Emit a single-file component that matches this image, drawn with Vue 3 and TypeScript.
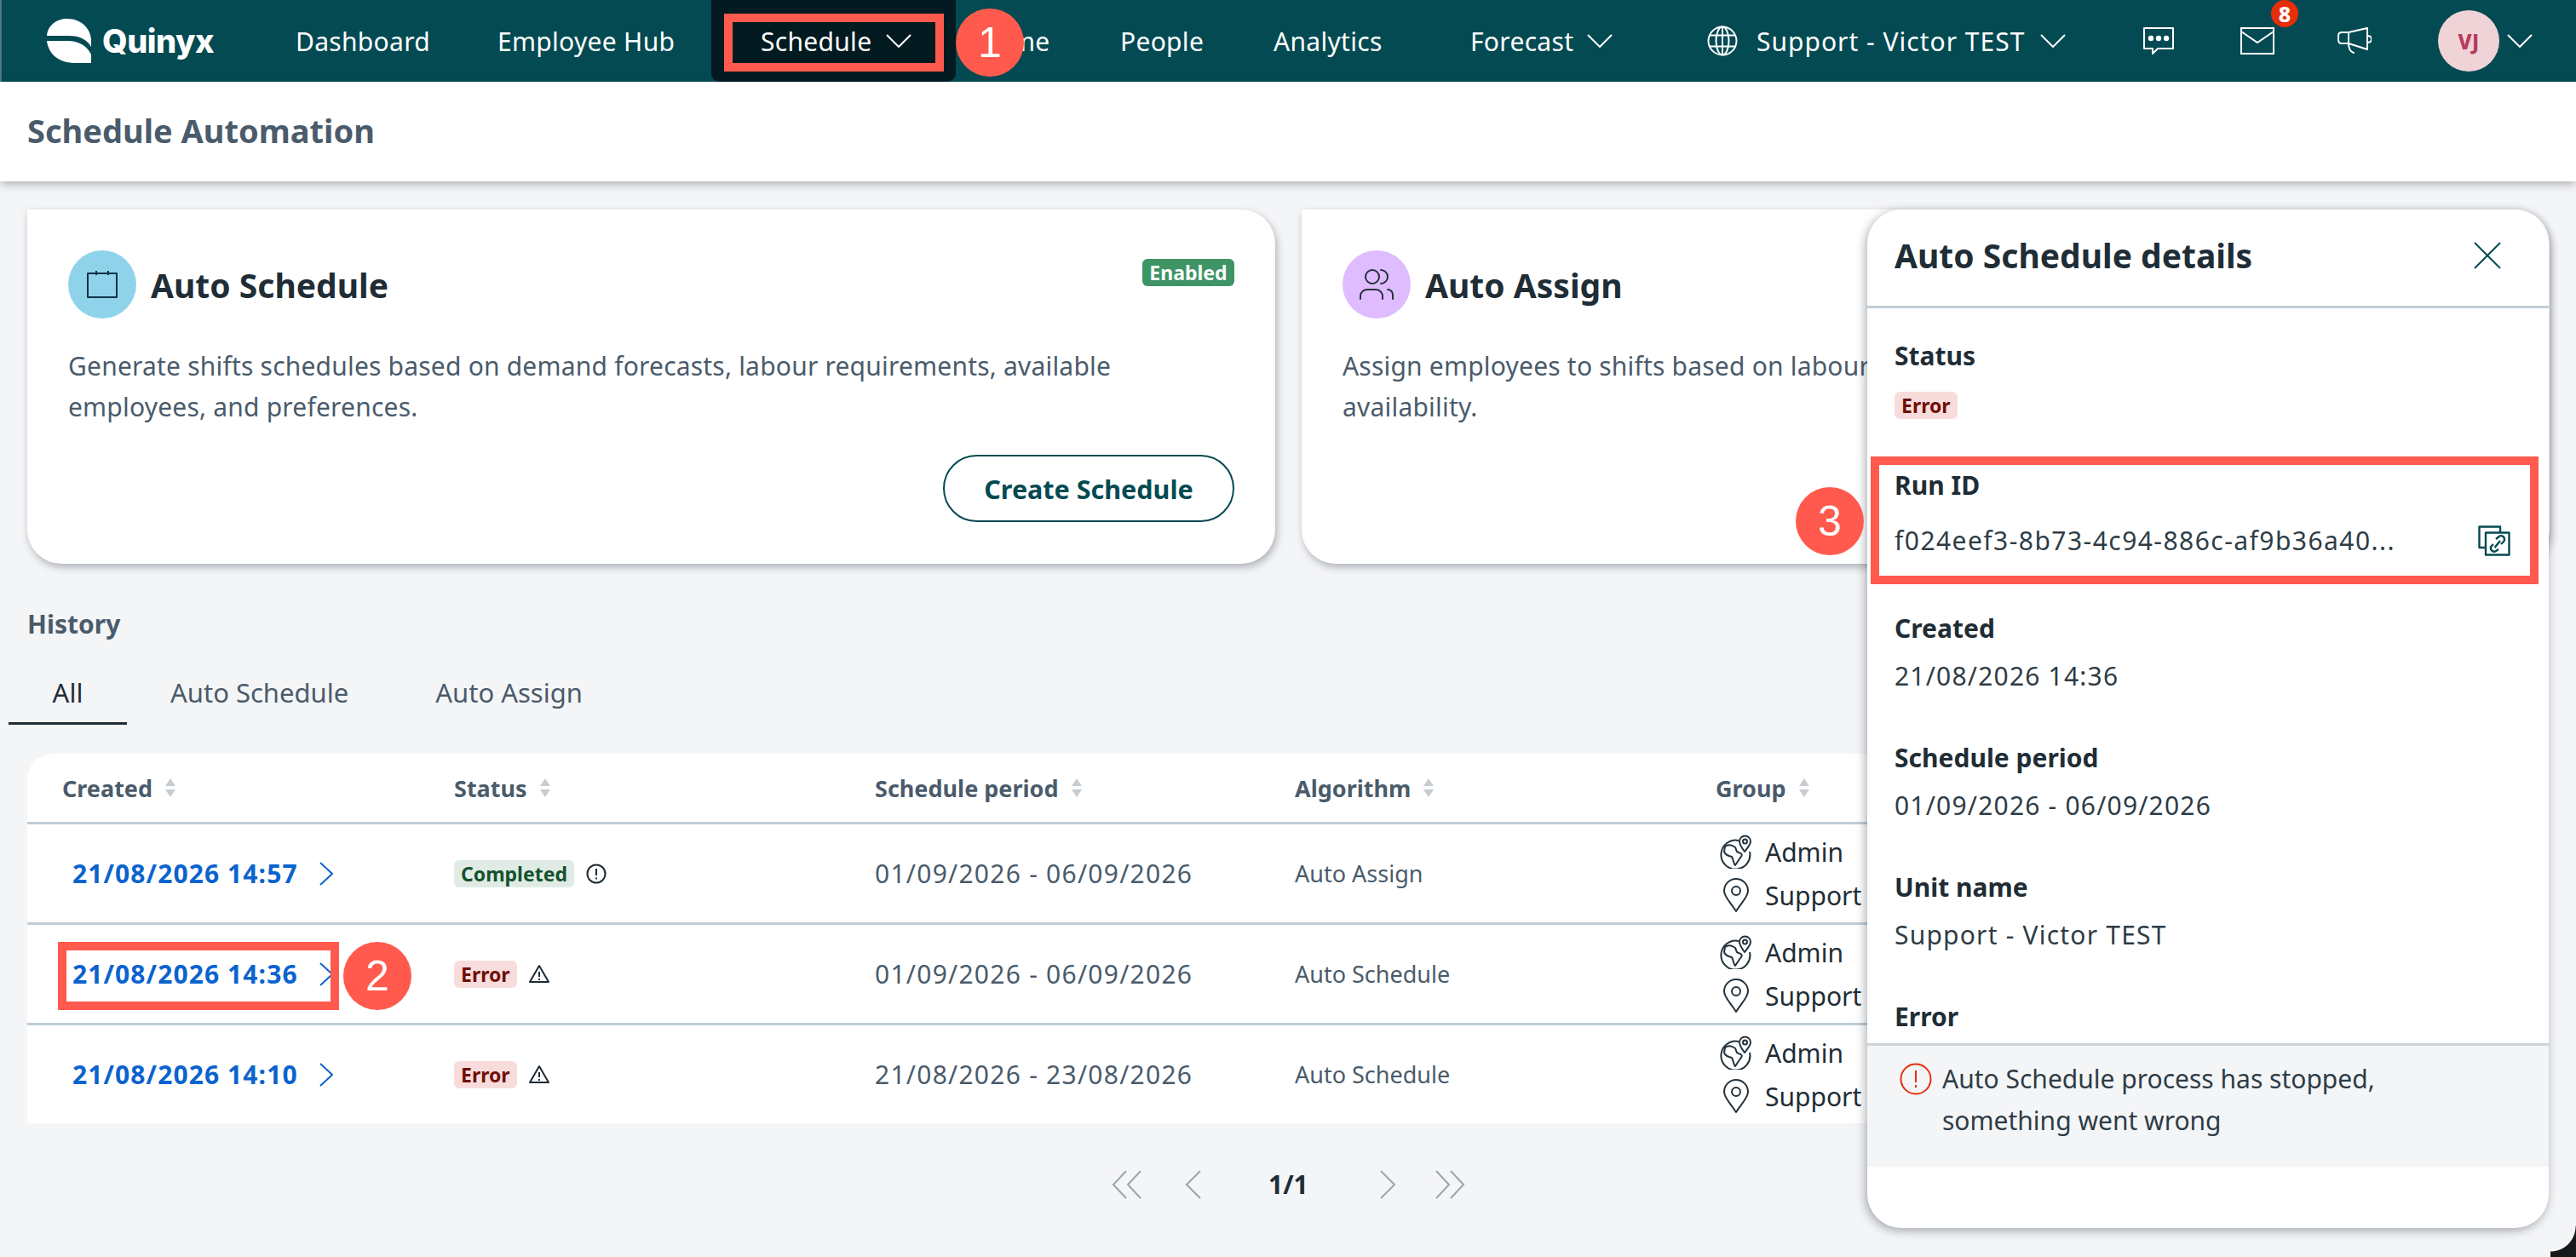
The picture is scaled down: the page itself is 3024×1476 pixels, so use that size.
<script setup lang="ts">
interface Run {
  created: string
  status: 'Completed' | 'Error'
  period: string
  algorithm: string
}

const tabs = ['All', 'Auto Schedule', 'Auto Assign']
const columns = ['Created', 'Status', 'Schedule period', 'Algorithm', 'Group']

const runs: Run[] = [
  { created: '21/08/2026 14:57', status: 'Completed', period: '01/09/2026 - 06/09/2026', algorithm: 'Auto Assign' },
  { created: '21/08/2026 14:36', status: 'Error', period: '01/09/2026 - 06/09/2026', algorithm: 'Auto Schedule' },
  { created: '21/08/2026 14:10', status: 'Error', period: '21/08/2026 - 23/08/2026', algorithm: 'Auto Schedule' },
]
</script>

<template>
  <div class="page">
    <header class="nav">
      <div class="logo">
        <svg class="logo-mark" viewBox="0 0 52 52" width="52" height="52">
          <path d="M0 20 C1 8 11 0 24 0 C40 0 51 11 52 24 L52 33 C47 24 38 20 26 20 Z" fill="#fff" />
          <path d="M0 26 L24 26 C38 26 47 32 52 42 L52 52 L34 52 C14 52 2 42 0 26 Z" fill="#fff" />
        </svg>
        <span class="logo-text">Quinyx</span>
      </div>
      <div class="nav-links">
        <a class="nav-item">Dashboard</a>
        <a class="nav-item">Employee Hub</a>
        <a class="nav-item nav-active">
          <span>Schedule</span>
          <svg class="chev" viewBox="0 0 30 16" width="30" height="16"><path d="M1 1 L15 15 L29 1" /></svg>
        </a>
        <a class="nav-item">Time</a>
        <a class="nav-item">People</a>
        <a class="nav-item">Analytics</a>
        <a class="nav-item forecast">
          <span>Forecast</span>
          <svg class="chev" viewBox="0 0 30 16" width="30" height="16"><path d="M1 1 L15 15 L29 1" /></svg>
        </a>
      </div>
      <div class="nav-right">
        <a class="unit">
          <svg viewBox="0 0 36 36" width="36" height="36" fill="none" stroke="#fff" stroke-width="2">
            <circle cx="18" cy="18" r="16.5" />
            <ellipse cx="18" cy="18" rx="7.5" ry="16.5" />
            <path d="M18 1.5 V34.5 M3 11.5 H33 M3 24.5 H33" />
          </svg>
          <span>Support - Victor TEST</span>
          <svg class="chev" viewBox="0 0 30 16" width="30" height="16"><path d="M1 1 L15 15 L29 1" /></svg>
        </a>
        <svg class="tool-chat" viewBox="0 0 36 32" width="36" height="32" fill="none" stroke="#fff" stroke-width="2">
          <path d="M1 1 H35 V25 H17 L11 31 V25 H1 Z" stroke-linejoin="round" />
          <circle cx="9" cy="13" r="2.2" fill="#fff" />
          <circle cx="18" cy="13" r="2.2" fill="#fff" />
          <circle cx="27" cy="13" r="2.2" fill="#fff" />
        </svg>
        <span class="mail">
          <svg viewBox="0 0 40 32" width="40" height="32" fill="none" stroke="#fff" stroke-width="2">
            <rect x="1" y="1" width="38" height="30" />
            <path d="M1 5 L20 18 L39 5" />
          </svg>
          <span class="mail-badge">8</span>
        </span>
        <svg class="tool-horn" viewBox="0 0 40 32" width="40" height="32" fill="none" stroke="#fff" stroke-width="2" stroke-linecap="round" stroke-linejoin="round">
          <path d="M35 1 V26 L13 19 H5 Q1 19 1 15 V10 Q1 6 5 6 H13 Z" />
          <path d="M13 6 V19 M35 10 Q40 10 40 14 Q40 18 35 18 M13 19 Q13 28 19 30" />
        </svg>
        <span class="avatar">VJ</span>
        <svg class="chev" viewBox="0 0 30 16" width="30" height="16"><path d="M1 1 L15 15 L29 1" /></svg>
      </div>
    </header>

    <div class="subheader">Schedule Automation</div>

    <main class="content">
      <section class="cards">
        <article class="card">
          <div class="card-head">
            <span class="card-icon icon-blue">
              <svg viewBox="0 0 36 32" width="36" height="32" fill="none" stroke="#0d3446" stroke-width="2">
                <rect x="1" y="3" width="34" height="28" stroke-linejoin="round" />
                <path d="M11 0 V5 M25 0 V5" />
              </svg>
            </span>
            <h2>Auto Schedule</h2>
            <span class="enabled">Enabled</span>
          </div>
          <p>Generate shifts schedules based on demand forecasts, labour requirements, available employees, and preferences.</p>
          <div class="card-foot">
            <button class="outline-btn">Create Schedule</button>
          </div>
        </article>
        <article class="card">
          <div class="card-head">
            <span class="card-icon icon-purple">
              <svg viewBox="0 0 40 36" width="40" height="36" fill="none" stroke="#23323c" stroke-width="2" stroke-linecap="round">
                <circle cx="15" cy="9" r="8" />
                <path d="M25 1 A8 8 0 0 1 25 17" />
                <path d="M1 35 V31 A8 8 0 0 1 9 24 H19 A8 8 0 0 1 27 31 V35" />
                <path d="M33 24 A6 6 0 0 1 39 30 V35" />
              </svg>
            </span>
            <h2>Auto Assign</h2>
          </div>
          <p>Assign employees to shifts based on labour requirements, skills, employee preferences, and availability.</p>
        </article>
      </section>

      <h3 class="history-title">History</h3>
      <nav class="tabs">
        <span v-for="(tab, i) in tabs" :key="tab" class="tab" :class="{ 'tab-active': i === 0 }">{{ tab }}</span>
      </nav>

      <section class="table">
        <div class="row row-head">
          <div v-for="col in columns" :key="col" class="head-cell">
            {{ col }}
            <svg viewBox="0 0 14 22" width="14" height="22">
              <path d="M7 0 L13 9 H1 Z" fill="#c6ccd1" />
              <path d="M7 22 L13 13 H1 Z" fill="#c6ccd1" />
            </svg>
          </div>
        </div>
        <div v-for="run in runs" :key="run.created" class="row row-body">
          <div class="cell-created">
            <a class="date-link">{{ run.created }}</a>
            <svg viewBox="0 0 16 28" width="16" height="28" fill="none" stroke="#0b63ce" stroke-width="2"><path d="M1 1 L15 14 L1 27" /></svg>
          </div>
          <div class="cell-status">
            <span class="badge" :class="run.status === 'Error' ? 'badge-error' : 'badge-done'">{{ run.status }}</span>
            <svg v-if="run.status === 'Completed'" viewBox="0 0 24 24" width="24" height="24" fill="none" stroke="#1c2a33" stroke-width="2">
              <circle cx="12" cy="12" r="10.5" />
              <path d="M12 6 V14 M12 16.5 V18.5" />
            </svg>
            <svg v-else viewBox="0 0 24 24" width="24" height="24" fill="none" stroke="#1c2a33" stroke-width="2" stroke-linejoin="round">
              <path d="M12 2 L23 21 H1 Z" />
              <path d="M12 9 V15 M12 17 V19" />
            </svg>
          </div>
          <div class="cell-period">{{ run.period }}</div>
          <div class="cell-algo">{{ run.algorithm }}</div>
          <div class="cell-group">
            <div class="group-line">
              <svg viewBox="0 0 38 40" width="38" height="40" fill="none" stroke="#23323c" stroke-width="2" stroke-linejoin="round">
                <path d="M22 7 A17 17 0 1 0 35 20" />
                <path d="M29 20 C26 16 23 12 23 8 A6.5 6.5 0 0 1 36 8 C36 12 32 16 29 20 Z" />
                <circle cx="29.5" cy="8" r="2.5" />
                <path d="M6 14 C10 11 14 12 18 15 C20 18 18 20 22 21 C26 22 27 24 24 27 C22 30 20 33 18 36 C16 34 16 30 14 26 C10 25 6 24 5 20 Z" />
              </svg>
              <span>Admin</span>
            </div>
            <div class="group-line">
              <svg viewBox="0 0 38 40" width="38" height="40" fill="none" stroke="#23323c" stroke-width="2" stroke-linejoin="round">
                <path d="M19 39 C12 28 5 22 5 15 A14 14 0 0 1 33 15 C33 22 26 28 19 39 Z" />
                <circle cx="19" cy="15" r="5" />
              </svg>
              <span>Support</span>
            </div>
          </div>
        </div>
      </section>

      <div class="pager">
        <svg viewBox="0 0 36 36" width="36" height="36"><path d="M17 2 L2 18 L17 34 M34 2 L19 18 L34 34" /></svg>
        <svg viewBox="0 0 20 36" width="20" height="36"><path d="M18 2 L2 18 L18 34" /></svg>
        <span class="pager-num">1/1</span>
        <svg viewBox="0 0 20 36" width="20" height="36"><path d="M2 2 L18 18 L2 34" /></svg>
        <svg viewBox="0 0 36 36" width="36" height="36"><path d="M2 2 L17 18 L2 34 M19 2 L34 18 L19 34" /></svg>
      </div>
    </main>

    <aside class="panel">
      <div class="panel-head">
        <h2>Auto Schedule details</h2>
        <svg viewBox="0 0 32 32" width="32" height="32" fill="none" stroke="#044a52" stroke-width="2"><path d="M1 1 L31 31 M31 1 L1 31" /></svg>
      </div>
      <div class="panel-body">
        <div class="field">
          <div class="label">Status</div>
          <span class="badge badge-error">Error</span>
        </div>
        <div class="field field-run">
          <div class="label">Run ID</div>
          <div class="value value-run">
            <span>f024eef3-8b73-4c94-886c-af9b36a40...</span>
            <svg viewBox="0 0 38 36" width="38" height="36" fill="none" stroke="#044a52" stroke-width="2.4" stroke-linejoin="round">
              <path d="M8 26 H1.5 V1.5 H26 V8" />
              <rect x="9" y="8.5" width="27.5" height="26" fill="#fff" />
              <path d="M21 16 L24 13.5 A4 4 0 0 1 30 19 L27 22 M24 28 L21 30 A4 4 0 0 1 15.5 24.5 L18 22 M19.5 26 L26 18" />
            </svg>
          </div>
        </div>
        <div class="field">
          <div class="label">Created</div>
          <div class="value">21/08/2026 14:36</div>
        </div>
        <div class="field">
          <div class="label">Schedule period</div>
          <div class="value">01/09/2026 - 06/09/2026</div>
        </div>
        <div class="field">
          <div class="label">Unit name</div>
          <div class="value">Support - Victor TEST</div>
        </div>
        <div class="field">
          <div class="label">Error</div>
        </div>
      </div>
      <div class="panel-error">
        <svg viewBox="0 0 38 38" width="38" height="38" fill="none" stroke="#e62e0a" stroke-width="2">
          <circle cx="19" cy="19" r="17.5" />
          <path d="M19 9 V23 M19 26 V29" />
        </svg>
        <p>Auto Schedule process has stopped, something went wrong</p>
      </div>
    </aside>

    <!-- annotation marks over the screenshot -->
    <div class="mark mark-1"></div>
    <div class="dot dot-1">1</div>
    <div class="mark mark-2"></div>
    <div class="dot dot-2">2</div>
    <div class="mark mark-3"></div>
    <div class="dot dot-3">3</div>
    <div class="window-corner"></div>
  </div>
</template>

<style scoped>
.page {
  position: relative;
  width: 3024px;
  height: 1476px;
  overflow: hidden;
  background: #f4f5f7;
  font-family: "Noto Sans", sans-serif;
  color: #1f2d36;
}

.nav {
  height: 96px;
  background: #044a52;
  box-shadow: inset 2px 0 0 #4a7a80;
  display: flex;
  align-items: center;
  color: #fff;
  font-size: 30px;
  letter-spacing: 0.3px;
}

.logo {
  display: flex;
  align-items: center;
  width: 347px;
  flex: none;
  padding-left: 55px;
  box-sizing: border-box;
}

.logo-mark {
  flex: none;
}

.logo-text {
  margin-left: 13px;
  font-family: Inter, sans-serif;
  font-weight: 800;
  font-size: 38px;
  letter-spacing: -0.5px;
}

.nav-links {
  display: grid;
  grid-template-columns: 237px 309px 269px 153px 180px 231px 278px;
  height: 96px;
  flex: none;
}

.nav-item {
  display: flex;
  align-items: center;
  white-space: nowrap;
}

.nav-active {
  position: relative;
  z-index: 0;
  gap: 17px;
}

.nav-active::before {
  content: "";
  position: absolute;
  z-index: -1;
  left: -58px;
  top: 0;
  width: 287px;
  height: 96px;
  background: #021a20;
  border-radius: 0 0 10px 10px;
}

.forecast {
  gap: 16px;
}

.nav-right {
  display: flex;
  align-items: center;
}

.unit {
  display: grid;
  grid-template-columns: 58px 333px 30px;
  align-items: center;
  white-space: nowrap;
  letter-spacing: 1px;
}

.chev {
  fill: none;
  stroke: #fff;
  stroke-width: 2;
  flex: none;
}

.tool-chat {
  margin-left: 91px;
}

.mail {
  position: relative;
  display: flex;
  margin-left: 78px;
  margin-right: 74px;
}

.mail-badge {
  position: absolute;
  left: 36px;
  top: -32px;
  width: 32px;
  height: 32px;
  border-radius: 50%;
  background: #e62e0a;
  font-size: 25px;
  font-weight: 800;
  letter-spacing: 0;
  text-align: center;
  line-height: 32px;
}

.avatar {
  width: 72px;
  height: 72px;
  margin-left: 78px;
  margin-right: 9px;
  border-radius: 50%;
  background: #f0d3d6;
  color: #b63a5e;
  font-size: 24px;
  font-weight: 800;
  display: flex;
  align-items: center;
  justify-content: center;
}

.subheader {
  height: 117px;
  background: #fff;
  padding-left: 32px;
  box-shadow: 0 3px 10px rgba(40, 50, 60, 0.35);
  display: flex;
  align-items: center;
  font-size: 38px;
  font-weight: 700;
  color: #4a5b6b;
  position: relative;
  padding-bottom: 4px;
  box-sizing: border-box;
}

.content {
  padding: 33px 32px 0;
}

.cards {
  display: grid;
  grid-template-columns: 1465px 1465px;
  gap: 31px;
}

.card {
  height: 416px;
  box-sizing: border-box;
  background: #fff;
  border-radius: 2px 40px 40px 40px;
  box-shadow: 2px 4px 10px rgba(40, 50, 60, 0.35);
  padding: 48px 48px 0;
}

.card-head {
  display: flex;
  align-items: center;
  position: relative;
  height: 80px;
}

.card-icon {
  width: 80px;
  height: 80px;
  border-radius: 50%;
  display: flex;
  align-items: center;
  justify-content: center;
  flex: none;
}

.icon-blue {
  background: #8fd3ea;
}

.icon-purple {
  background: #dfbcff;
}

.card-head h2 {
  margin: 0 0 0 17px;
  font-size: 39px;
  font-weight: 700;
  color: #1f2d36;
}

.enabled {
  position: absolute;
  right: 0;
  top: 10px;
  height: 32px;
  width: 108px;
  border-radius: 6px;
  background: #3e9464;
  color: #fff;
  font-size: 23px;
  font-weight: 700;
  text-align: center;
  line-height: 32px;
}

.card p {
  margin: 32px 0 0;
  font-size: 30px;
  line-height: 48px;
  letter-spacing: 0.2px;
  color: #4a5b6b;
}

.card-foot {
  display: flex;
  justify-content: flex-end;
  margin-top: 32px;
}

.outline-btn {
  width: 342px;
  height: 79px;
  border-radius: 40px;
  border: 2px solid #044a52;
  background: #fff;
  color: #044a52;
  font-family: inherit;
  font-size: 30.5px;
  font-weight: 700;
}

.history-title {
  margin: 53px 0 0;
  font-size: 30px;
  line-height: 36px;
  font-weight: 700;
  color: #4a5b6b;
}

.tabs {
  display: flex;
  margin: 28px 0 0 -22px;
  height: 72px;
}

.tab {
  height: 72px;
  box-sizing: border-box;
  padding: 0 51px;
  line-height: 68px;
  font-size: 31px;
  color: #4a5b6b;
}

.tab-active {
  width: 139px;
  padding: 0;
  text-align: center;
  color: #1f2d36;
  border-bottom: 3px solid #1f2d36;
}

.table {
  margin-top: 34px;
  width: 2960px;
  background: #fff;
  border-radius: 30px 0 0 0;
  overflow: hidden;
}

.row {
  display: grid;
  grid-template-columns: 460px 494px 493px 494px 1fr;
  padding-left: 41px;
  align-items: center;
}

.row-head {
  height: 83px;
  border-bottom: 3px solid #c0cdd6;
  box-sizing: border-box;
}

.head-cell {
  display: flex;
  align-items: center;
  gap: 14px;
  font-size: 27px;
  font-weight: 700;
  color: #4a5b6b;
}

.row-body {
  height: 118px;
  box-sizing: border-box;
  border-bottom: 3px solid #c0cdd6;
}

.row-body:last-child {
  height: 115px;
  border-bottom: none;
}

.cell-created {
  display: flex;
  align-items: center;
  gap: 25px;
  padding-left: 12px;
}

.date-link {
  color: #0b63ce;
  font-size: 30px;
  font-weight: 700;
  letter-spacing: 1.1px;
}

.cell-status {
  display: flex;
  align-items: center;
  gap: 14px;
}

.badge {
  display: inline-block;
  height: 32px;
  padding: 0 8px;
  border-radius: 6px;
  font-size: 23px;
  font-weight: 700;
  line-height: 32px;
}

.badge-error {
  background: #f8dcdc;
  color: #6e0f05;
}

.badge-done {
  background: #e0ebe5;
  color: #14522e;
}

.cell-period {
  font-size: 30px;
  letter-spacing: 1.25px;
  color: #4a5b6b;
}

.cell-algo {
  font-size: 27px;
  color: #4a5b6b;
}

.cell-group {
  display: flex;
  flex-direction: column;
  gap: 9px;
  margin-left: 5px;
}

.group-line {
  display: flex;
  align-items: center;
  gap: 15px;
  height: 42px;
  font-size: 30px;
  white-space: nowrap;
}

.pager {
  display: flex;
  align-items: center;
  margin: 51px 0 0 1273px;
}

.pager svg {
  fill: none;
  stroke: #9aa5ae;
  stroke-width: 2;
}

.pager svg:nth-child(1) {
  margin-right: 50px;
}

.pager svg:nth-child(4) {
  margin-right: 45px;
}

.pager-num {
  width: 208px;
  box-sizing: border-box;
  padding-left: 78px;
  font-size: 30px;
  font-weight: 700;
  color: #1f2d36;
}

.panel {
  position: absolute;
  left: 2192px;
  top: 246px;
  width: 800px;
  height: 1196px;
  background: #fff;
  border-radius: 40px;
  box-shadow: -2px 3px 12px rgba(40, 50, 60, 0.4);
  display: flex;
  flex-direction: column;
  overflow: hidden;
}

.panel-head {
  height: 116px;
  flex: none;
  box-sizing: border-box;
  padding: 0 56px 6px 32px;
  border-bottom: 3px solid #c0cdd6;
  display: flex;
  align-items: center;
  justify-content: space-between;
}

.panel-head h2 {
  margin: 0;
  font-size: 39px;
  font-weight: 700;
}

.panel-body {
  height: 863px;
  flex: none;
  overflow: hidden;
  padding: 38px 32px 0;
  box-sizing: border-box;
}

.field {
  height: 152px;
}

.field-run {
  height: 168px;
}

.label {
  font-size: 30px;
  line-height: 36px;
  font-weight: 700;
  color: #1f2d36;
  margin-bottom: 20px;
}

.field > .badge {
  margin-top: 4px;
  vertical-align: top;
}

.value {
  font-size: 30px;
  line-height: 36px;
  letter-spacing: 1.2px;
  color: #2e3c46;
}

.value-run {
  display: flex;
  align-items: center;
  justify-content: space-between;
  margin-top: 29px;
  padding-right: 13px;
  letter-spacing: 1.45px;
}

.panel-error {
  height: 145px;
  flex: none;
  box-sizing: border-box;
  border-top: 3px solid #cdd2d6;
  background: #f4f5f7;
  padding: 20px 40px 0 38px;
  display: flex;
  gap: 12px;
}

.panel-error svg {
  flex: none;
}

.panel-error p {
  margin: -6px 0 0;
  width: 600px;
  font-size: 30px;
  line-height: 49px;
  color: #2e3c46;
}

.mark {
  position: absolute;
  box-sizing: border-box;
  border: 10px solid #ff5a4d;
}

.mark-1 {
  left: 850px;
  top: 16px;
  width: 258px;
  height: 68px;
}

.mark-2 {
  left: 68px;
  top: 1106px;
  width: 330px;
  height: 80px;
}

.mark-3 {
  left: 2196px;
  top: 536px;
  width: 784px;
  height: 150px;
}

.dot {
  position: absolute;
  width: 80px;
  height: 80px;
  border-radius: 50%;
  background: #ff5a4d;
  color: #fff;
  font-family: "Liberation Sans", sans-serif;
  font-size: 50px;
  text-align: center;
  line-height: 80px;
}

.dot-1 {
  left: 1122px;
  top: 10px;
}

.dot-2 {
  left: 403px;
  top: 1106px;
}

.dot-3 {
  left: 2108px;
  top: 572px;
}

.window-corner {
  position: absolute;
  right: 0;
  bottom: 0;
  width: 30px;
  height: 36px;
  background: radial-gradient(circle at 0 0, transparent 29px, #16181a 30px);
}
</style>
